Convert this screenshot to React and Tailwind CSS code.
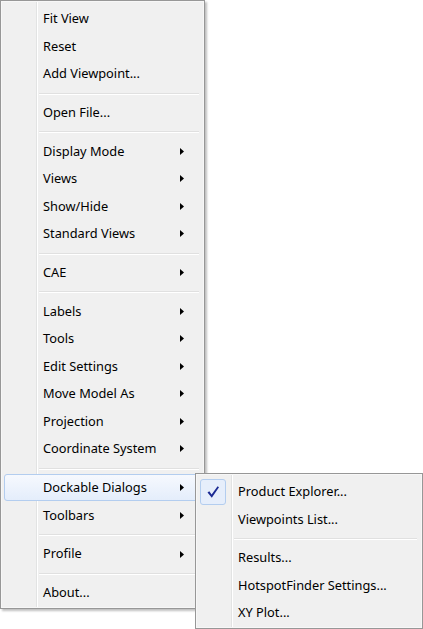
import React from 'react';

const mainItems = [
    { label: 'Fit View' },
    { label: 'Reset' },
    { label: 'Add Viewpoint...' },
    { sep: true },
    { label: 'Open File...' },
    { sep: true },
    { label: 'Display Mode', sub: true },
    { label: 'Views', sub: true },
    { label: 'Show/Hide', sub: true },
    { label: 'Standard Views', sub: true },
    { sep: true },
    { label: 'CAE', sub: true },
    { sep: true },
    { label: 'Labels', sub: true },
    { label: 'Tools', sub: true },
    { label: 'Edit Settings', sub: true },
    { label: 'Move Model As', sub: true },
    { label: 'Projection', sub: true },
    { label: 'Coordinate System', sub: true },
    { sep: true },
    { label: 'Dockable Dialogs', sub: true, active: true },
    { label: 'Toolbars', sub: true },
    { sep: true },
    { label: 'Profile', sub: true },
    { sep: true },
    { label: 'About...' },
];

const subItems = [
    { label: 'Product Explorer...', checked: true },
    { label: 'Viewpoints List...' },
    { sep: true },
    { label: 'Results...' },
    { label: 'HotspotFinder Settings...' },
    { label: 'XY Plot...' },
];

const menuBox =
    "border border-[#979797] bg-[#f0f0f0] bg-[linear-gradient(to_right,#f0f0f0_35px,#e2e3e3_35px,#e2e3e3_36px,#ffffff_36px,#ffffff_37px,#f0f0f0_37px)] shadow-[inset_0_0_0_1px_#f7f7f7,2px_2px_2px_rgba(0,0,0,0.25)] px-[3px] pt-[4px] pb-[1px]";

const Arrow = () => (
    <svg width="4" height="7" viewBox="0 0 4 7" className="ml-auto mr-[16px] shrink-0">
        <polygon points="0,0 4,3.5 0,7" fill="#000" />
    </svg>
);

const Separator = () => (
    <div className="h-[11.3px] pt-[5px]">
        <div className="ml-[35px] mr-[2px] h-px bg-[#e0e0e0] border-b border-white box-content" />
    </div>
);

const CheckBox = () => (
    <div className="w-[26px] h-[26px] shrink-0 rounded-[3px] border border-[#b3cdef] bg-[#e6eefb] flex items-center justify-center">
        <svg width="16" height="16" viewBox="0 0 16 16">
            <path d="M2.5 8.5 L4.3 7.2 L6.6 10.6 L12.6 2.2 L14 3.2 L6.8 13.8 Z" fill="#1b2a93" />
        </svg>
    </div>
);

export default function App() {
    return (
        <div className="relative w-[423px] h-[629px] bg-white text-black text-[12.8px] font-['Segoe_UI','Noto_Sans',sans-serif]">
            <div className={`w-[205px] ${menuBox}`}>
                {mainItems.map((item, i) =>
                    item.sep ? (
                        <Separator key={i} />
                    ) : (
                        <div
                            key={i}
                            className={`h-[27.5px] flex items-center pl-[38px] rounded-[3px] border ${
                                item.active
                                    ? 'border-[#b3cdef] bg-gradient-to-b from-[#f6f9fe] to-[#e4edfb]'
                                    : 'border-transparent'
                            }`}
                        >
                            <span className="whitespace-nowrap">{item.label}</span>
                            {item.sub && <Arrow />}
                        </div>
                    )
                )}
            </div>

            <div className={`absolute left-[195px] top-[473px] w-[228px] ${menuBox}`}>
                {subItems.map((item, i) =>
                    item.sep ? (
                        <Separator key={i} />
                    ) : (
                        <div key={i} className="h-[27.5px] flex items-center pl-[39px] relative">
                            {item.checked && (
                                <div className="absolute left-[1px] top-[1px]">
                                    <CheckBox />
                                </div>
                            )}
                            <span className="whitespace-nowrap">{item.label}</span>
                        </div>
                    )
                )}
            </div>
        </div>
    );
}
